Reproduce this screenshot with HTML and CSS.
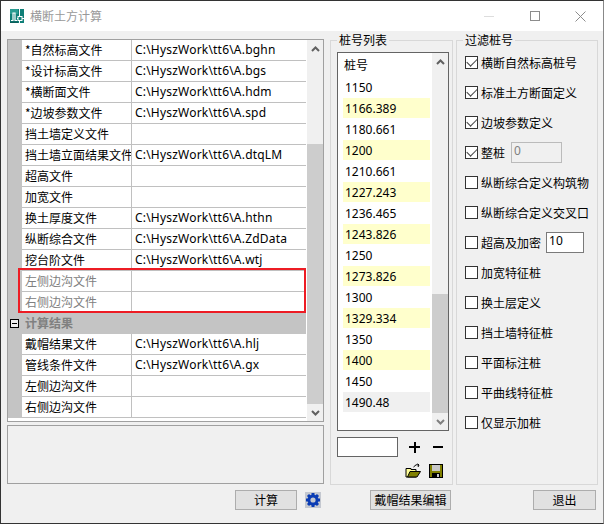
FILE: index.html
```html
<!DOCTYPE html>
<html lang="zh-CN">
<head>
  <meta charset="UTF-8" />
  <title>横断土方计算</title>
  <link rel="stylesheet" href="styles.css">
</head>
<body>
  <div class="window">
    <div class="titlebar">
      <svg class="appIcon" width="14" height="14" viewBox="0 0 14 14">
        <rect width="14" height="14" fill="#0f7f78"/>
        <rect x="0" y="0" width="8" height="5" fill="#2a9c92"/>
        <path d="M1 11.5 H3 V4 H5 V11.5 H7" fill="none" stroke="#fff" stroke-width="1.2"/>
        <path d="M9.5 0 V14 M7 9.5 H14" stroke="#fff" stroke-width="1"/>
        <rect x="8" y="7.5" width="4" height="4" fill="#0f7f78" stroke="#fff"/>
        <rect x="0" y="12.5" width="8" height="1.5" fill="#0b5f5a"/>
      </svg>
      <span class="title">横断土方计算</span>
      <div class="winBtns">
        <span class="winMin"></span>
        <span class="winMax"></span>
        <svg class="winClose" width="11" height="11" viewBox="0 0 11 11"><path d="M0.5 0.5 L10.5 10.5 M10.5 0.5 L0.5 10.5" stroke="#8c8c8c" fill="none"/></svg>
      </div>
    </div>

    <div class="content">
      <div class="leftCol">
        <div class="grid">
          <div class="gridRows">
            <div class="row"><div class="name">*自然标高文件</div><div class="val">C:\HyszWork\tt6\A.bghn</div></div>
            <div class="row"><div class="name">*设计标高文件</div><div class="val">C:\HyszWork\tt6\A.bgs</div></div>
            <div class="row"><div class="name">*横断面文件</div><div class="val">C:\HyszWork\tt6\A.hdm</div></div>
            <div class="row"><div class="name">*边坡参数文件</div><div class="val">C:\HyszWork\tt6\A.spd</div></div>
            <div class="row"><div class="name">挡土墙定义文件</div><div class="val"></div></div>
            <div class="row"><div class="name">挡土墙立面结果文件</div><div class="val">C:\HyszWork\tt6\A.dtqLM</div></div>
            <div class="row"><div class="name">超高文件</div><div class="val"></div></div>
            <div class="row"><div class="name">加宽文件</div><div class="val"></div></div>
            <div class="row"><div class="name">换土厚度文件</div><div class="val">C:\HyszWork\tt6\A.hthn</div></div>
            <div class="row"><div class="name">纵断综合文件</div><div class="val">C:\HyszWork\tt6\A.ZdData</div></div>
            <div class="row"><div class="name">挖台阶文件</div><div class="val">C:\HyszWork\tt6\A.wtj</div></div>
            <div class="row disabled"><div class="name">左侧边沟文件</div><div class="val"></div></div>
            <div class="row disabled"><div class="name">右侧边沟文件</div><div class="val"></div></div>
            <div class="groupRow"><span class="minusBox"></span>计算结果</div>
            <div class="row"><div class="name">戴帽结果文件</div><div class="val">C:\HyszWork\tt6\A.hlj</div></div>
            <div class="row"><div class="name">管线条件文件</div><div class="val">C:\HyszWork\tt6\A.gx</div></div>
            <div class="row"><div class="name">左侧边沟文件</div><div class="val"></div></div>
            <div class="row"><div class="name">右侧边沟文件</div><div class="val"></div></div>
            <div class="redBox"></div>
          </div>
          <div class="scrollbar gridScroll">
            <svg class="arrow" width="9" height="6" viewBox="0 0 9 6"><path d="M1 5 L4.5 1.5 L8 5" fill="none" stroke="#606060" stroke-width="2"/></svg>
            <div class="track"></div>
            <div class="thumb"></div>
            <svg class="arrow" width="9" height="6" viewBox="0 0 9 6"><path d="M1 1 L4.5 4.5 L8 1" fill="none" stroke="#606060" stroke-width="2"/></svg>
          </div>
        </div>
        <div class="descBox"></div>
      </div>

      <div class="group listGroup">
        <span class="groupTitle">桩号列表</span>
        <div class="listBox">
          <div class="listRows">
            <div class="listHead">桩号</div>
            <div class="item">1150</div>
            <div class="item marked">1166.389</div>
            <div class="item">1180.661</div>
            <div class="item marked">1200</div>
            <div class="item">1210.661</div>
            <div class="item marked">1227.243</div>
            <div class="item">1236.465</div>
            <div class="item marked">1243.826</div>
            <div class="item">1250</div>
            <div class="item marked">1273.826</div>
            <div class="item">1300</div>
            <div class="item marked">1329.334</div>
            <div class="item">1350</div>
            <div class="item marked">1400</div>
            <div class="item">1450</div>
            <div class="item current">1490.48</div>
          </div>
          <div class="scrollbar listScroll">
            <svg class="arrow" width="9" height="6" viewBox="0 0 9 6"><path d="M1 5 L4.5 1.5 L8 5" fill="none" stroke="#606060" stroke-width="2"/></svg>
            <div class="track"></div>
            <div class="thumb"></div>
            <svg class="arrow" width="9" height="6" viewBox="0 0 9 6"><path d="M1 1 L4.5 4.5 L8 1" fill="none" stroke="#808080" stroke-width="2"/></svg>
          </div>
        </div>
        <div class="addRow">
          <div class="addInput"></div>
          <span class="plus"></span>
          <span class="minus"></span>
        </div>
        <div class="fileRow">
          <svg width="16" height="15" viewBox="0 0 16 15">
            <path d="M1 5.5 H6 V6.5 H11 V14 H1 Z" fill="#ffff99" stroke="#000"/>
            <path d="M2.5 14 L5 8.5 H15.5 L12 14 Z" fill="#808000" stroke="#000"/>
            <path d="M8.5 4 Q11 0.5 14 2 M14 2 L12.5 0.8 M14 2 L13 4" fill="none" stroke="#000"/>
          </svg>
          <svg width="14" height="14" viewBox="0 0 14 14">
            <rect x="0.5" y="0.5" width="13" height="13" fill="#808000" stroke="#000"/>
            <rect x="3" y="1" width="8" height="6" fill="#c8c8c8"/>
            <rect x="3" y="9" width="8" height="5" fill="#000"/>
            <rect x="8" y="10" width="2" height="3" fill="#c8c8c8"/>
          </svg>
        </div>
      </div>

      <div class="group filterGroup">
        <span class="groupTitle">过滤桩号</span>
        <div class="check"><span class="box on"></span>横断自然标高桩号</div>
        <div class="check"><span class="box on"></span>标准土方断面定义</div>
        <div class="check"><span class="box on"></span>边坡参数定义</div>
        <div class="check"><span class="box on"></span>整桩<span class="numInput off">0</span></div>
        <div class="check"><span class="box"></span>纵断综合定义构筑物</div>
        <div class="check"><span class="box"></span>纵断综合定义交叉口</div>
        <div class="check"><span class="box"></span>超高及加密<span class="numInput">10</span></div>
        <div class="check"><span class="box"></span>加宽特征桩</div>
        <div class="check"><span class="box"></span>换土层定义</div>
        <div class="check"><span class="box"></span>挡土墙特征桩</div>
        <div class="check"><span class="box"></span>平面标注桩</div>
        <div class="check"><span class="box"></span>平曲线特征桩</div>
        <div class="check"><span class="box"></span>仅显示加桩</div>
      </div>
    </div>

    <div class="footer">
      <div class="btn calcBtn">计算</div>
      <svg class="gear" width="16" height="16" viewBox="0 0 16 16">
        <rect width="16" height="16" fill="#c4c8d0"/>
        <path d="M8 1 V15 M1 8 H15 M3 3 L13 13 M13 3 L3 13" stroke="#0a3cb4" stroke-width="3"/>
        <circle cx="8" cy="8" r="5.5" fill="#0a3cb4"/>
        <circle cx="8" cy="8" r="2.6" fill="#c4c8d0"/>
      </svg>
      <div class="btn editBtn">戴帽结果编辑</div>
      <div class="btn exitBtn">退出</div>
    </div>
  </div>
</body>
</html>
```

FILE: styles.css
```css
* {
  box-sizing: border-box;
}

body {
  margin: 0;
  font-family: "Noto Sans CJK SC", "Noto Sans", sans-serif;
  font-size: 12px;
  color: #000;
}

.window {
  width: 604px;
  height: 524px;
  background-color: #f0f0f0;
  border-top: 1px solid #333;
  border-left: 1px solid #333;
  border-bottom: 1px solid #333;
  border-right: 1px solid #888;
  overflow: hidden;
}

.titlebar {
  height: 30px;
  background-color: #fff;
  display: flex;
  align-items: center;
  padding-left: 9px;
}

.title {
  margin-left: 6px;
  color: #999;
  line-height: 16px;
}

.winBtns {
  margin-left: auto;
  display: flex;
  align-items: center;
  padding-right: 17px;
}

.winMin {
  width: 10px;
  height: 1px;
  background-color: #ddd;
}

.winMax {
  width: 10px;
  height: 10px;
  border: 1px solid #8c8c8c;
  margin-left: 36px;
}

.winClose {
  margin-left: 35px;
}

.content {
  display: flex;
  padding: 8px 0 0 6px;
  height: 453px;
}

.leftCol {
  width: 317px;
  display: flex;
  flex-direction: column;
  gap: 3px;
}

.grid {
  display: flex;
  height: 383px;
  border: 1px solid #a0a0a0;
  background-color: #fff;
}

.gridRows {
  position: relative;
  width: 298px;
}

.row {
  display: flex;
  height: 21px;
  border-bottom: 1px solid #c0c0c0;
  margin-left: 14px;
  line-height: 20px;
}

.name {
  width: 110px;
  padding-left: 3px;
  border-right: 1px solid #c0c0c0;
  white-space: nowrap;
  overflow: hidden;
}

.val {
  padding-left: 3px;
  font-family: "Noto Sans", sans-serif;
  letter-spacing: 0.2px;
}

.disabled .name {
  color: #808080;
}

/* gray gutter on the left of the rows */
.gridRows::before {
  content: "";
  position: absolute;
  left: 0;
  top: 0;
  width: 14px;
  height: 378px;
  background-color: #c4c4c4;
}

.groupRow {
  position: relative;
  height: 21px;
  background-color: #c4c4c4;
  color: #808080;
  font-weight: bold;
  line-height: 20px;
  padding-left: 17px;
}

.minusBox {
  position: absolute;
  left: 2px;
  top: 6px;
  width: 9px;
  height: 9px;
  border: 1px solid #000;
  background: linear-gradient(#000, #000) center / 5px 1px no-repeat #f0f0f0;
}

.redBox {
  position: absolute;
  left: 10px;
  top: 228px;
  width: 288px;
  height: 45px;
  border: 2px solid #ed1c24;
}

.scrollbar {
  display: flex;
  flex-direction: column;
  align-items: center;
  background-color: #f0f0f0;
}

.arrow {
  flex: none;
  margin: 6px 0;
}

.track {
  flex: none;
}

.thumb {
  flex: none;
  width: 100%;
  background-color: #cdcdcd;
}

.gridScroll {
  width: 16px;
  margin-left: 1px;
}

.gridScroll .track {
  height: 86px;
}

.gridScroll .thumb {
  height: 260px;
}

.descBox {
  height: 60px;
  border: 1px solid #a0a0a0;
}

.group {
  position: relative;
  margin-top: 1px;
  border: 1px solid #d8d8d8;
  height: 445px;
}

/* caption sits on the group's top border */
.groupTitle {
  position: absolute;
  left: 6px;
  top: -9px;
  padding: 0 2px;
  line-height: 16px;
  background-color: #f0f0f0;
}

.listGroup {
  width: 123px;
  margin-left: 6px;
  padding: 11px 4px 0 6px;
}

.listBox {
  display: flex;
  width: 112px;
  height: 379px;
  border: 1px solid #646464;
  background-color: #fff;
}

.listRows {
  width: 92px;
  padding-left: 5px;
}

.listHead {
  height: 24px;
  line-height: 24px;
  padding-left: 1px;
}

.item {
  height: 21px;
  line-height: 21px;
  padding-left: 2px;
  border-bottom: 1px solid #fff;
  font-family: "Noto Sans", sans-serif;
}

.marked {
  background-color: #ffffcc;
}

.current {
  background-color: #f0f0f0;
}

.listScroll {
  width: 16px;
  margin-left: 2px;
}

.listScroll .track {
  height: 223px;
}

.listScroll .thumb {
  height: 119px;
}

.addRow {
  display: flex;
  align-items: center;
  margin-top: 6px;
}

.addInput {
  width: 61px;
  height: 20px;
  background-color: #fff;
  border: 1px solid #646464;
}

.plus {
  width: 11px;
  height: 11px;
  margin-left: 11px;
  background: linear-gradient(#000, #000) center / 11px 2px no-repeat, linear-gradient(#000, #000) center / 2px 11px no-repeat;
}

.minus {
  width: 10px;
  height: 2px;
  margin-left: 13px;
  background-color: #000;
}

.fileRow {
  display: flex;
  align-items: center;
  gap: 8px;
  margin: 6px 0 0 68px;
}

.filterGroup {
  width: 142px;
  margin-left: 3px;
  padding: 6px 0 0 8px;
}

.check {
  display: flex;
  align-items: center;
  height: 30px;
  white-space: nowrap;
}

.box {
  flex: none;
  position: relative;
  width: 13px;
  height: 13px;
  margin-right: 3px;
  background-color: #fff;
  border: 1px solid #333;
}

/* tick mark */
.box.on::after {
  content: "";
  position: absolute;
  left: 1px;
  top: 1px;
  width: 9px;
  height: 5px;
  border-left: 1.5px solid #444;
  border-bottom: 1.5px solid #444;
  transform: rotate(-45deg);
}

.numInput {
  height: 21px;
  line-height: 15px;
  padding-left: 2px;
  margin-left: 5px;
  width: 38px;
  background-color: #fff;
  border: 1px solid #7a7a7a;
  font-family: "Noto Sans", sans-serif;
}

.numInput.off {
  width: 51px;
  margin-left: 6px;
  background-color: #f0f0f0;
  border-color: #bbb;
  color: #808080;
}

.footer {
  display: flex;
  align-items: center;
  height: 39px;
  padding-bottom: 8px;
  padding-left: 234px;
}

.btn {
  height: 20px;
  line-height: 18px;
  text-align: center;
  background-color: #e1e1e1;
  border: 1px solid #adadad;
}

.calcBtn {
  width: 62px;
}

.gear {
  margin-left: 8px;
}

.editBtn {
  width: 81px;
  margin-left: 49px;
}

.exitBtn {
  width: 63px;
  margin-left: 82px;
}
```
